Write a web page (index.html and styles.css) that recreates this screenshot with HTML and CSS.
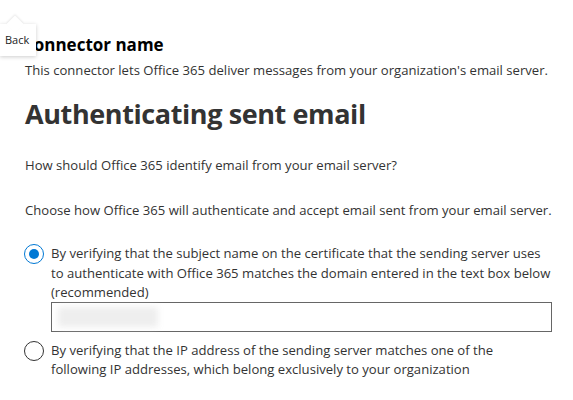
FILE: index.html
```html
<!DOCTYPE html>
<html lang="en">
<head>
  <meta charset="UTF-8" />
  <title>Edit Connector</title>
  <link rel="stylesheet" href="styles.css">
</head>
<body>
  <div class="tooltip">Back</div>
  <div class="panel">
    <h2 class="section-title">connector name</h2>
    <p class="intro">This connector lets Office 365 deliver messages from your organization's email server.</p>

    <h1 class="page-title">Authenticating sent email</h1>
    <p class="text">How should Office 365 identify email from your email server?</p>
    <p class="text text-choose">Choose how Office 365 will authenticate and accept email sent from your email server.</p>

    <div class="choice">
      <span class="radio checked"></span>
      <div class="choice-body">
        <div class="choice-label">By verifying that the subject name on the certificate that the sending server uses to authenticate with Office 365 matches the domain entered in the text box below (recommended)</div>
        <div class="field"><span class="blurred"></span></div>
      </div>
    </div>

    <div class="choice choice-ip">
      <span class="radio"></span>
      <div class="choice-body">
        <div class="choice-label">By verifying that the IP address of the sending server matches one of the following IP addresses, which belong exclusively to your organization</div>
      </div>
    </div>
  </div>
</body>
</html>
```

FILE: styles.css
```css
body {
  margin: 0;
  font-family: 'Open Sans', sans-serif;
  background: #fff;
  color: #333;
  overflow: hidden;
}

.panel {
  padding: 33px 21px 0 25px;
}

.section-title {
  margin: 0;
  font-size: 17px;
  font-weight: 700;
  color: #000;
  line-height: 24px;
}

.intro {
  margin: 3px 0 0;
  font-size: 13.1px;
  line-height: 20px;
}

.page-title {
  margin: 16px 0 0;
  font-size: 27px;
  letter-spacing: -0.4px;
  font-weight: 700;
  color: #333;
  line-height: 36px;
}

.text {
  margin: 23px 0 0;
  font-size: 13.1px;
  line-height: 20px;
}

.text-choose {
  margin-top: 25px;
}

.choice {
  display: flex;
  margin-top: 24px;
}

.choice-ip {
  margin-top: 9px;
}

.choice-ip .choice-label {
  padding-right: 12px;
}

.radio {
  flex: none;
  width: 20px;
  height: 20px;
  border: 1px solid #333;
  border-radius: 50%;
  margin: 0 7px 0 -1px;
  box-sizing: border-box;
  position: relative;
}

.radio.checked {
  border-color: #0078d4;
}

.radio.checked::after {
  content: "";
  position: absolute;
  left: 4px;
  top: 4px;
  width: 10px;
  height: 10px;
  border-radius: 50%;
  background: #0078d4;
}

.choice-body {
  flex: 1;
}

.choice-label {
  font-size: 13.1px;
  line-height: 19.5px;
}

.field {
  height: 30px;
  border: 1px solid #666;
  box-sizing: border-box;
  display: flex;
  align-items: center;
  padding-left: 6px;
  margin-top: -1px;
}

.blurred {
  width: 100px;
  height: 20px;
  background: #eee;
  filter: blur(3px);
}

.tooltip {
  position: absolute;
  left: 0;
  top: 24px;
  width: 36px;
  height: 32px;
  background: #fff;
  box-shadow: 0 1px 4px rgba(0, 0, 0, 0.2);
  font-size: 11px;
  line-height: 32px;
  text-indent: 5px;
  color: #222;
  z-index: 2;
}

.tooltip::before {
  content: "";
  position: absolute;
  left: 9px;
  top: -6px;
  width: 12px;
  height: 12px;
  background: #fff;
  transform: rotate(45deg);
  box-shadow: -1px -1px 2px rgba(0, 0, 0, 0.08);
  z-index: -1;
}
```
